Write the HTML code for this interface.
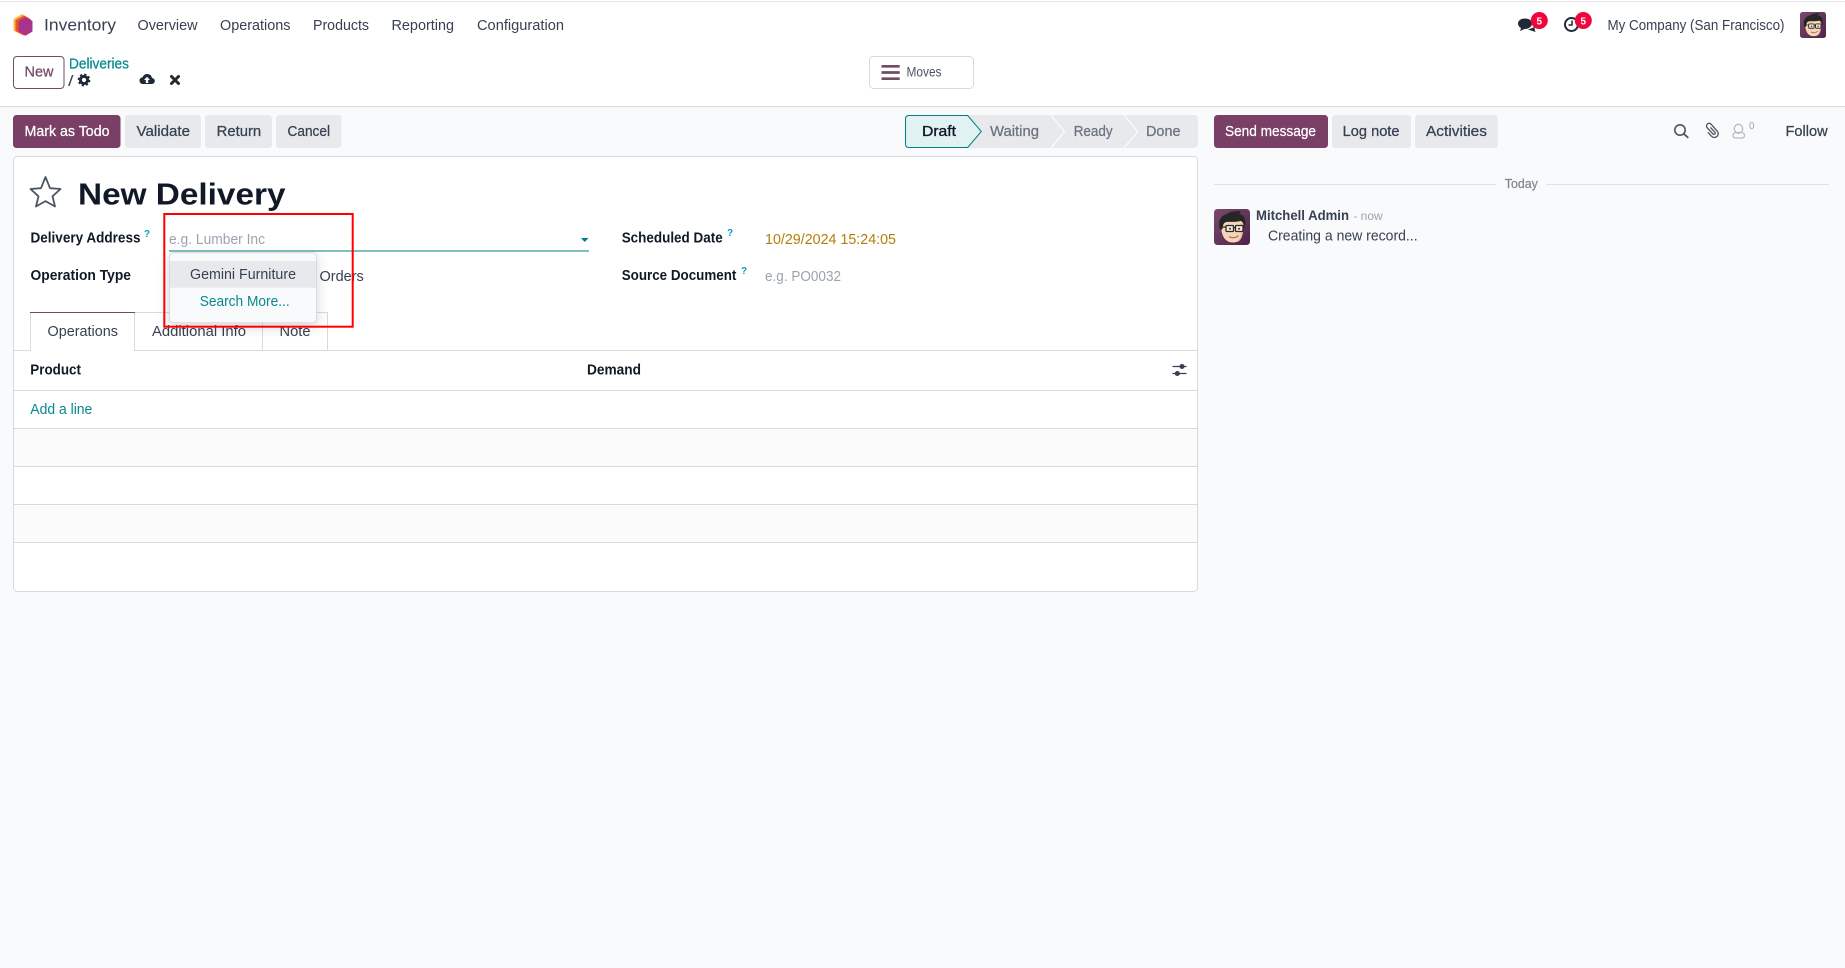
<!DOCTYPE html>
<html lang="en">
<head>
<meta charset="utf-8">
<title>New Delivery</title>
<style>
html,body{margin:0;padding:0;width:1845px;height:968px;overflow:hidden;background:#f9fafb}
svg{display:block}
text{font-family:"Liberation Sans",Arial,sans-serif;font-size:14.5px;fill:#374151}
.b{font-weight:700;fill:#111827}
.m{stroke-width:.25px;paint-order:stroke}
.t{fill:#06898f}
.g{fill:#9ca3af}
.q{font-size:10px;font-weight:700;fill:#0a9cc0}
</style>
</head>
<body>
<svg width="1845" height="968" viewBox="0 0 1845 968" xmlns="http://www.w3.org/2000/svg">
<defs>
<filter id="sh" x="-20%" y="-20%" width="140%" height="140%"><feDropShadow dx="0" dy="4" stdDeviation="6" flood-color="#000" flood-opacity=".16"/></filter>
<linearGradient id="av" x1="0" y1="0" x2="1" y2="1"><stop offset="0" stop-color="#7a4a6e"/><stop offset="1" stop-color="#4f2249"/></linearGradient>
<symbol id="face" viewBox="0 0 36 36">
<rect width="36" height="36" rx="3.500" fill="url(#av)"/>
<path d="M7 15C7 27 11 33.500 19 33.500C26 33.500 29.500 27 29.500 15C29.500 12 24 10 18 10C12 10 7 12 7 15Z" fill="#f7d6b8"/>
<path d="M26 14C29 20 28 29 22 33C27 33 29.500 27 29.500 15Z" fill="#e8b896"/>
<path d="M5.500 19C4.500 12 6 7 13 5C15 3 20 2 27 2C25.500 3.500 25.500 4.500 25.500 5C31 6 32.500 12 31 18L29.500 16C29 13 28 12.500 26.500 12C20 13.500 15 12.500 12.500 13C10 13.500 9 15 8.500 20L7 21Z" fill="#262626"/>
<rect x="12" y="16.500" width="7.500" height="6" rx="1" fill="#fbe6d4" stroke="#2b2b2b" stroke-width="1.300"/>
<rect x="21.500" y="16.500" width="7.500" height="6" rx="1" fill="#fbe6d4" stroke="#2b2b2b" stroke-width="1.300"/>
<path d="M19.500 18.500H21.500M8 18H12M29 18H30.500" stroke="#2b2b2b" stroke-width="1.200"/>
<circle cx="16" cy="19.800" r="1" fill="#333"/><circle cx="25" cy="19.800" r="1" fill="#333"/>
<path d="M15 27.500C18 29.500 22 29 24.500 26.500" fill="none" stroke="#a96a55" stroke-width="1.200"/>
</symbol>
</defs>

<!-- page & header -->
<rect width="1845" height="968" fill="#f9fafb"/>
<rect width="1845" height="106" fill="#fff"/>
<rect y="1" width="1845" height="1" fill="#e3e5e8"/>
<rect y="106" width="1845" height="1" fill="#d8dadd"/>

<!-- logo -->
<path d="M22 14L29 18V31L22 35L13.500 30.500V19Z" fill="#fdb849"/>
<path d="M24 15.500L31 19.500V31.500L24 35.500L15.500 31V20Z" fill="#f0541e"/>
<path d="M25.500 17L32.500 21V31.500L25.500 35.700L18.500 31.500V21Z" fill="#a9338a"/>

<!-- nav -->
<text x="44" y="30.500" style="font-size:17px" textLength="72" lengthAdjust="spacingAndGlyphs">Inventory</text>
<text x="137.500" y="30" textLength="60" lengthAdjust="spacingAndGlyphs">Overview</text>
<text x="220" y="30" textLength="70.500" lengthAdjust="spacingAndGlyphs">Operations</text>
<text x="313" y="30" textLength="56" lengthAdjust="spacingAndGlyphs">Products</text>
<text x="391.500" y="30" textLength="62.500" lengthAdjust="spacingAndGlyphs">Reporting</text>
<text x="477" y="30" textLength="87" lengthAdjust="spacingAndGlyphs">Configuration</text>

<!-- systray -->
<path d="M1525 18.500C1521 18.500 1518 20.500 1518 23.500C1518 25.500 1519 27 1521 28L1520 31L1524.500 29C1529 29 1532 26.500 1532 23.500C1532 20.500 1529 18.500 1525 18.500Z" fill="#1f2937"/>
<path d="M1528 29.500L1535.500 32L1534.500 28.500L1536 26.500" fill="#1f2937"/>
<circle cx="1539.300" cy="20.500" r="8.500" fill="#f0063c"/>
<text x="1539.300" y="24.300" text-anchor="middle" style="font-size:10px;font-weight:700;fill:#fff">5</text>
<circle cx="1571.500" cy="24.500" r="6.500" fill="none" stroke="#1f2937" stroke-width="2"/>
<path d="M1572 20.500V25H1568.500" fill="none" stroke="#1f2937" stroke-width="1.500"/>
<circle cx="1583.300" cy="20.500" r="8.500" fill="#f0063c"/>
<text x="1583.300" y="24.300" text-anchor="middle" style="font-size:10px;font-weight:700;fill:#fff">5</text>
<text x="1607.500" y="30" textLength="177" lengthAdjust="spacingAndGlyphs">My Company (San Francisco)</text>
<use href="#face" x="1800" y="12" width="26" height="26"/>

<!-- control panel -->
<rect x="13.500" y="56.500" width="50.500" height="32" rx="3.500" fill="#fff" stroke="#714b67"/>
<text x="24.500" y="76.500" class="m" style="fill:#714b67;stroke:#714b67" textLength="29" lengthAdjust="spacingAndGlyphs">New</text>
<text x="69" y="68.500" class="t m" style="stroke:#06898f" textLength="60" lengthAdjust="spacingAndGlyphs">Deliveries</text>
<text x="68" y="86" textLength="5.500" lengthAdjust="spacingAndGlyphs">/</text>
<circle cx="84" cy="80" r="3.600" fill="none" stroke="#1f2937" stroke-width="3"/>
<circle cx="84" cy="80" r="5.600" fill="none" stroke="#1f2937" stroke-width="1.500" stroke-dasharray="2.200 2.200"/>
<path d="M143 84C140.500 84 139.500 82.200 139.500 80.500C139.500 78.800 140.800 77.500 142.500 77.400C143.300 75.300 145 74 147.200 74C149.800 74 151.700 75.800 152 78C153.700 78.300 154.800 79.400 154.800 81C154.800 82.800 153.500 84 151.500 84Z" fill="#1f2937"/>
<path d="M147 76.700L150 80H148.200V83H145.800V80H144Z" fill="#fff"/>
<path d="M171.500 76.500L178.500 83.500M178.500 76.500L171.500 83.500" stroke="#1f2937" stroke-width="3" stroke-linecap="round"/>

<!-- Moves -->
<rect x="869.500" y="56.500" width="104" height="32" rx="4" fill="#fff" stroke="#d8dadd"/>
<path d="M881.500 66.300H899.700M881.500 72.500H899.700M881.500 78.700H899.700" stroke="#714b67" stroke-width="2.700"/>
<text x="906.500" y="76.500" style="font-size:13.500px;fill:#4b5563" textLength="35" lengthAdjust="spacingAndGlyphs">Moves</text>

<!-- action buttons -->
<rect x="13" y="115" width="107.500" height="33" rx="3.500" fill="#7a3f66"/>
<text x="24.500" y="136" class="m" style="fill:#fff;stroke:#fff" textLength="85" lengthAdjust="spacingAndGlyphs">Mark as Todo</text>
<rect x="125" y="115" width="76" height="33" rx="3.500" fill="#e7e9ed"/>
<text x="136.500" y="136" class="m" stroke="#374151" textLength="53.500" lengthAdjust="spacingAndGlyphs">Validate</text>
<rect x="205" y="115" width="67" height="33" rx="3.500" fill="#e7e9ed"/>
<text x="216.700" y="136" class="m" stroke="#374151" textLength="44.500" lengthAdjust="spacingAndGlyphs">Return</text>
<rect x="276" y="115" width="65.500" height="33" rx="3.500" fill="#e7e9ed"/>
<text x="287.500" y="136" class="m" stroke="#374151" textLength="42.500" lengthAdjust="spacingAndGlyphs">Cancel</text>

<!-- statusbar -->
<rect x="905" y="115" width="293" height="33" rx="4" fill="#e7e9ed"/>
<path d="M1051 115L1064.500 131.500L1051 148M1124 115L1137.800 131.500L1124 148" fill="none" stroke="#fff" stroke-width="1"/>
<path d="M909 115.500H967.700L981.300 131.500L967.700 147.500H909Q905.500 147.500 905.500 144V119Q905.500 115.500 909 115.500Z" fill="#e0f2f1" stroke="#017e84"/>
<text x="922" y="136" class="b" style="font-weight:400;stroke:#111827;stroke-width:.35px" textLength="34" lengthAdjust="spacingAndGlyphs">Draft</text>
<text x="990" y="136" class="m" style="fill:#6b7280;stroke:#6b7280" textLength="49" lengthAdjust="spacingAndGlyphs">Waiting</text>
<text x="1073.700" y="136" class="m" style="fill:#6b7280;stroke:#6b7280" textLength="39" lengthAdjust="spacingAndGlyphs">Ready</text>
<text x="1146" y="136" class="m" style="fill:#6b7280;stroke:#6b7280" textLength="34.500" lengthAdjust="spacingAndGlyphs">Done</text>

<!-- sheet -->
<rect x="13.500" y="156.500" width="1184" height="435" rx="4" fill="#fff" stroke="#d8dadd"/>
<path d="M45.500 178.500L50 189.700L60.500 190.500L52.500 197.800L55 208L45.500 202.600L36 208L38.500 197.800L30.500 190.500L41 189.700Z" fill="none" stroke="#4b5563" stroke-width="1.800" stroke-linejoin="round" transform="translate(0 -1.500)"/>
<text x="78" y="204.300" style="font-size:31px;font-weight:700;fill:#111827" textLength="207.500" lengthAdjust="spacingAndGlyphs">New Delivery</text>

<text x="30.500" y="242.300" class="b" textLength="110" lengthAdjust="spacingAndGlyphs">Delivery Address</text>
<text x="144" y="237" class="q">?</text>
<text x="169" y="244" class="g" textLength="96" lengthAdjust="spacingAndGlyphs">e.g. Lumber Inc</text>
<rect x="169" y="250.500" width="420" height="1" fill="#017e84"/>
<path d="M581 238H588.500L584.700 242Z" fill="#017e84"/>
<text x="30.500" y="280" class="b" textLength="100.500" lengthAdjust="spacingAndGlyphs">Operation Type</text>
<text x="319.500" y="281" textLength="44.300" lengthAdjust="spacingAndGlyphs">Orders</text>

<text x="621.700" y="242.300" class="b" textLength="101" lengthAdjust="spacingAndGlyphs">Scheduled Date</text>
<text x="727" y="236" class="q">?</text>
<text x="765" y="244" style="fill:#b47d0a" textLength="131" lengthAdjust="spacingAndGlyphs">10/29/2024 15:24:05</text>
<text x="621.700" y="280" class="b" textLength="114.700" lengthAdjust="spacingAndGlyphs">Source Document</text>
<text x="741" y="274" class="q">?</text>
<text x="765" y="281" class="g" textLength="76" lengthAdjust="spacingAndGlyphs">e.g. PO0032</text>

<!-- tabs -->
<path d="M13.500 350.500H1197.500" stroke="#d8dadd"/>
<path d="M134.500 312.500H327.500V350M262.500 312.500V350" fill="none" stroke="#d8dadd"/>
<path d="M30.500 350.500V312.500H134.500V350.500" fill="#fff" stroke="#d8dadd"/>
<path d="M30 312.500H135" stroke="#714b67"/>
<rect x="31" y="348" width="103" height="3.500" fill="#fff"/>
<text x="47.500" y="336" textLength="70.500" lengthAdjust="spacingAndGlyphs">Operations</text>
<text x="152" y="336" textLength="94" lengthAdjust="spacingAndGlyphs">Additional Info</text>
<text x="279.500" y="336" textLength="31" lengthAdjust="spacingAndGlyphs">Note</text>

<!-- list -->
<text x="30.300" y="374.700" class="b" textLength="50.700" lengthAdjust="spacingAndGlyphs">Product</text>
<text x="587" y="374.700" class="b" textLength="54" lengthAdjust="spacingAndGlyphs">Demand</text>
<path d="M1172.500 366.500H1186.500M1172.500 373.500H1186.500" stroke="#374151" stroke-width="1.200"/>
<circle cx="1182" cy="366.500" r="2.500" fill="#374151"/><circle cx="1177.300" cy="373.500" r="2.500" fill="#374151"/>
<rect x="14" y="390" width="1183" height="1" fill="#d8dadd"/>
<text x="30.300" y="414" class="t" textLength="62" lengthAdjust="spacingAndGlyphs">Add a line</text>
<rect x="14" y="428.500" width="1183" height="38" fill="#fbfbfb"/>
<rect x="14" y="504.500" width="1183" height="38" fill="#fbfbfb"/>
<path d="M14 428.500H1197M14 466.500H1197M14 504.500H1197M14 542.500H1197" stroke="#d8dadd"/>

<!-- dropdown -->
<rect x="169.500" y="252.800" width="147" height="70" rx="4" fill="#f9fafb" stroke="#d8dadd" filter="url(#sh)"/>
<rect x="170" y="261" width="146" height="26.700" fill="#e7e9ed"/>
<text x="190" y="279" textLength="106" lengthAdjust="spacingAndGlyphs">Gemini Furniture</text>
<text x="199.700" y="306" class="t" textLength="90" lengthAdjust="spacingAndGlyphs">Search More...</text>

<!-- annotation -->
<rect x="164.300" y="214" width="188.400" height="112.700" fill="none" stroke="#f00" stroke-width="2"/>

<!-- chatter -->
<rect x="1214" y="115" width="114" height="33" rx="3.500" fill="#7a3f66"/>
<text x="1225" y="136" class="m" style="fill:#fff;stroke:#fff" textLength="91" lengthAdjust="spacingAndGlyphs">Send message</text>
<rect x="1332" y="115" width="79" height="33" rx="3.500" fill="#e7e9ed"/>
<text x="1342.700" y="136" class="m" stroke="#374151" textLength="56.800" lengthAdjust="spacingAndGlyphs">Log note</text>
<rect x="1415" y="115" width="82.800" height="33" rx="3.500" fill="#e7e9ed"/>
<text x="1426" y="136" class="m" stroke="#374151" textLength="61" lengthAdjust="spacingAndGlyphs">Activities</text>

<circle cx="1680" cy="130" r="5.200" fill="none" stroke="#4b5563" stroke-width="1.600"/>
<path d="M1683.800 133.800L1688.300 137.800" stroke="#4b5563" stroke-width="1.800"/>
<path d="M1.300 -3V3.500A1.300 1.300 0 0 1 -1.300 3.500V-5A2.600 2.600 0 0 1 3.900 -5V4.200A3.900 3.900 0 0 1 -3.900 4.200V-1" fill="none" stroke="#4b5563" stroke-width="1.300" transform="translate(1711.500 130.500) rotate(-42)"/>
<ellipse cx="1738.500" cy="128.800" rx="4.200" ry="4.500" fill="none" stroke="#b6bbc3" stroke-width="1.300"/>
<path d="M1733 135.500C1733 133.500 1734.500 132.500 1736 132.500H1741.500C1743 132.500 1744.500 133.500 1744.500 135.500C1744.500 137 1743.500 138 1742 138H1735.500C1734 138 1733 137 1733 135.500Z" fill="none" stroke="#b6bbc3" stroke-width="1.300"/>
<text x="1749" y="129" style="font-size:10px;fill:#9ca3af" textLength="5.500" lengthAdjust="spacingAndGlyphs">0</text>
<text x="1785.500" y="136" class="m" stroke="#374151" textLength="42.200" lengthAdjust="spacingAndGlyphs">Follow</text>

<path d="M1214 184.500H1496.500M1546 184.500H1829" stroke="#dfe1e5"/>
<text x="1504.800" y="188" style="font-size:12.500px;fill:#7f8691;stroke:#7f8691;stroke-width:.2px" textLength="33" lengthAdjust="spacingAndGlyphs">Today</text>

<use href="#face" x="1214" y="209" width="36" height="36"/>
<text x="1256" y="220" class="b" style="fill:#374151;font-size:13.500px" textLength="93" lengthAdjust="spacingAndGlyphs">Mitchell Admin</text>
<text x="1353.400" y="220" class="g" style="font-size:12px" textLength="29.200" lengthAdjust="spacingAndGlyphs">- now</text>
<text x="1268" y="240.700" textLength="149.600" lengthAdjust="spacingAndGlyphs">Creating a new record...</text>
</svg>
</body>
</html>
